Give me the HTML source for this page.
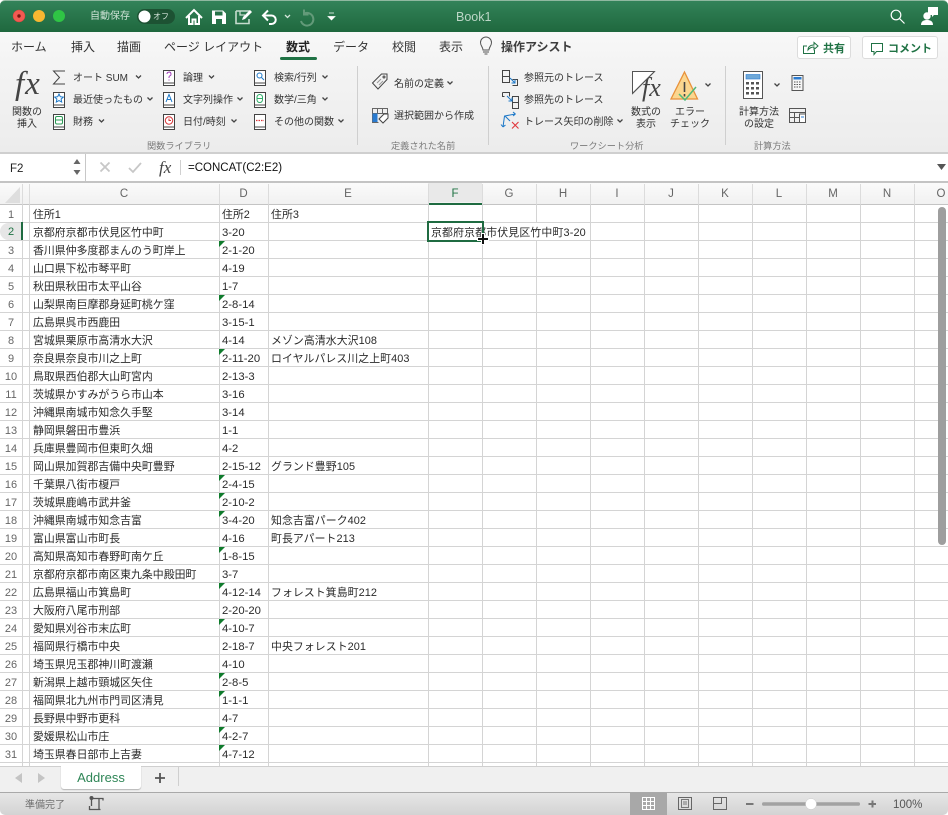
<!DOCTYPE html>
<html lang="ja"><head><meta charset="utf-8"><title>Book1</title>
<style>
html,body{margin:0;padding:0;background:#fff}
#a{position:relative;width:948px;height:815px;overflow:hidden;background:#fff;font-family:"Liberation Sans","Noto Sans CJK JP",sans-serif;color:#222}
#a div,#a span,#a svg{position:absolute}
.t{white-space:nowrap;line-height:14px;font-size:10px;color:#333;margin-top:2px}
.l{white-space:nowrap;line-height:14px;font-size:9.2px;color:#7b7b7b;top:139px}
.tab{white-space:nowrap;top:40px;line-height:15px;font-size:12px;color:#333}
.ctr{text-align:center;white-space:nowrap;font-size:10px;line-height:11.5px;color:#333}
.sep{width:1px;background:#cfcfcf;top:66px;height:79px}
.hl{top:183px;height:22px;line-height:22px;text-align:center;font-size:11.5px;color:#666}
.vl{top:204px;height:562px;width:1px;background:#d4d4d4}
.vh{top:184px;height:20px;width:1px;background:#dcdcdc}
.r{left:0;width:948px;height:18px}
.r b{position:absolute;left:0;top:1px;width:22px;text-align:center;font-weight:normal;font-size:11px;line-height:18px;color:#666}
.r i,.r u,.r s{position:absolute;font-style:normal;text-decoration:none;white-space:nowrap;font-size:10.9px;line-height:18px;color:#2a2a2a;top:1px}
.r i{left:33px}.r u{left:222px;font-size:11.3px}.r s{left:271px;letter-spacing:.06px}
.r em{position:absolute;left:219px;top:0;width:0;height:0;border-top:6px solid #0f7b2c;border-right:6px solid transparent}
svg{overflow:visible}
</style></head><body><div id="a">

<!-- title bar -->
<div style="left:0;top:0;width:948px;height:32px;background:linear-gradient(#33835a 0,#2c7a50 30%,#1f683e 100%);border-radius:5px 5px 0 0;border-top:1px solid #8fb8a0;box-sizing:border-box"></div>
<svg style="left:0;top:0" width="948" height="32" fill="none">
<circle cx="19" cy="16" r="6" fill="#f25a52" stroke="#d8433b" stroke-width=".5"/><circle cx="19" cy="16" r="1.7" fill="#7a1410"/>
<circle cx="39" cy="16" r="6" fill="#f7b731"/><circle cx="59" cy="16" r="6" fill="#2fc545"/>
<rect x="137" y="9" width="38" height="15" rx="7.5" fill="#1d5233"/><circle cx="144.500" cy="16.500" r="6" fill="#fff"/>
<path d="M186 18l8-8 8 8M189 16v8h3.500v-4.500h3V24h3.500v-8" stroke="#fff" stroke-width="2"/>
<path d="M212 10.500h11l3 3V24h-14z" fill="#fff"/><rect x="215" y="11.500" width="7.500" height="4" fill="#267248"/><rect x="216" y="19" width="6" height="5" fill="#267248"/>
<path d="M236 11h13v3M236 11v12.500h13V19" stroke="#c5dccd" stroke-width="1.600"/><path d="M240 11v4h5" stroke="#c5dccd" stroke-width="1.300"/><path d="M242 20l1-3 7-7 2 2-7 7z" fill="#fff"/>
<path d="M268 10.500l-5 5 5 5M263 15.500h8.500a4.200 4.200 0 0 1 0 8.500H269" stroke="#fff" stroke-width="2"/>
<path d="M285 15l2.500 2.500L290 15" stroke="#d5e5da" stroke-width="1.300"/>
<path d="M304 9.500v5h4.500M304.500 13.500a6.300 6.300 0 1 1-3.500 7.500" stroke="#639a79" stroke-width="2"/>
<path d="M329 13h5M328 16.500h7l-3.500 3.500z" fill="#fff" stroke="#fff" stroke-width=".7"/>
<circle cx="896" cy="15" r="4.800" stroke="#fff" stroke-width="1.200"/><path d="M899.500 18.500l5 5" stroke="#fff" stroke-width="1.200"/>
<path d="M928 7h10v8h-4l-2 2v-2h-4z" fill="#fff"/><circle cx="927" cy="16" r="3.700" fill="#fff"/><path d="M921 25c0-4 3-5 6-5s6 1 6 5z" fill="#fff"/>
</svg>
<div class="t" style="left:90px;top:8px;color:#cfe3d6;font-size:10px">自動保存</div>
<div class="t" style="left:153px;top:8px;color:#d4e4da;font-size:8px">オフ</div>
<div class="t" style="left:456px;top:7px;width:40px;color:#bdd7c7;font-size:12.5px;line-height:16px">Book1</div>

<!-- ribbon -->
<div style="left:0;top:32px;width:948px;height:121px;background:linear-gradient(#f8f8f8 0,#f4f4f4 25%,#ececec 100%)"></div>
<div style="left:0;top:152px;width:948px;height:2px;background:#cfcfcf"></div>
<div class="tab" style="left:11px">ホーム</div>
<div class="tab" style="left:71px">挿入</div>
<div class="tab" style="left:117px">描画</div>
<div class="tab" style="left:164px">ページ レイアウト</div>
<div class="tab" style="left:286px;color:#222;font-weight:bold">数式</div>
<div class="tab" style="left:333px">データ</div>
<div class="tab" style="left:392px">校閲</div>
<div class="tab" style="left:439px">表示</div>
<div style="left:280px;top:57px;width:37px;height:3px;background:#1f7244;border-radius:2px"></div>
<div class="tab" style="left:501px;font-weight:bold;color:#3d3d3d">操作アシスト</div>
<div style="left:797px;top:36px;width:54px;height:23px;background:#fff;border:1px solid #dcdcdc;border-radius:3px;box-sizing:border-box"></div>
<div style="left:862px;top:36px;width:76px;height:23px;background:#fff;border:1px solid #dcdcdc;border-radius:3px;box-sizing:border-box"></div>
<div class="t" style="left:823px;top:40px;font-size:11px;color:#1f7244;font-weight:bold">共有</div>
<div class="t" style="left:888px;top:40px;font-size:11px;color:#1f7244;font-weight:bold">コメント</div>

<div style="left:15px;top:64px;width:30px;font:italic 33px/40px 'Liberation Serif',serif;color:#444;letter-spacing:1px;white-space:nowrap">fx</div>
<div class="ctr" style="left:7px;top:107px;width:40px">関数の<br>挿入</div>
<div class="t" style="left:73px;top:70px">オート SUM</div>
<div class="t" style="left:73px;top:92px">最近使ったもの</div>
<div class="t" style="left:73px;top:114px">財務</div>
<div class="t" style="left:183px;top:70px">論理</div>
<div class="t" style="left:183px;top:92px">文字列操作</div>
<div class="t" style="left:183px;top:114px">日付/時刻</div>
<div class="t" style="left:274px;top:70px">検索/行列</div>
<div class="t" style="left:274px;top:92px">数学/三角</div>
<div class="t" style="left:274px;top:114px">その他の関数</div>
<div class="l" style="left:147px">関数ライブラリ</div>
<div class="sep" style="left:357px"></div>
<div class="t" style="left:394px;top:76px">名前の定義</div>
<div class="t" style="left:394px;top:108px">選択範囲から作成</div>
<div class="l" style="left:391px">定義された名前</div>
<div class="sep" style="left:488px"></div>
<div class="t" style="left:524px;top:70px">参照元のトレース</div>
<div class="t" style="left:524px;top:92px">参照先のトレース</div>
<div class="t" style="left:524px;top:114px">トレース矢印の削除</div>
<div class="ctr" style="left:626px;top:107px;width:40px">数式の<br>表示</div>
<div class="ctr" style="left:665px;top:107px;width:50px">エラー<br>チェック</div>
<div class="l" style="left:570px">ワークシート分析</div>
<div class="sep" style="left:725px"></div>
<div class="ctr" style="left:734px;top:107px;width:50px">計算方法<br>の設定</div>
<div class="l" style="left:754px">計算方法</div>
<div style="left:633px;top:63px;width:30px;font:italic 26px/50px 'Liberation Serif',serif;color:#444;padding-left:9px;white-space:nowrap;height:50px">fx</div>

<svg style="left:0;top:0" width="948" height="160" fill="none">
<!-- chevrons -->
<g stroke="#444" stroke-width="1.300">
<path d="M136 75.500l2.500 2.500 2.500-2.500M147.500 97.500l2.500 2.500 2.500-2.500M99 119.500l2.500 2.500 2.500-2.500M209 75.500l2.500 2.500 2.500-2.500M237.500 97.500l2.500 2.500 2.500-2.500M231.500 119.500l2.500 2.500 2.500-2.500M322.500 75.500l2.500 2.500 2.500-2.500M322.500 97.500l2.500 2.500 2.500-2.500M338.500 119.500l2.500 2.500 2.500-2.500M447.500 81.500l2.500 2.500 2.500-2.500M617.500 119.500l2.500 2.500 2.500-2.500M705.500 83.500l2.500 2.500 2.500-2.500M774.500 83.500l2.500 2.500 2.500-2.500"/>
</g>
<!-- sigma -->
<path d="M65 71H53.500l6 6.500-6 6.500H65" stroke="#444"/>
<!-- book icons -->
<g stroke="#444" fill="#fff">
<path d="M53.500 92.500h11v15h-11z"/><path d="M53.500 114.500h11v15h-11z"/>
<path d="M163.500 70.500h11v15h-11z"/><path d="M163.500 92.500h11v15h-11z"/><path d="M163.500 114.500h11v15h-11z"/>
<path d="M254.500 70.500h11v15h-11z"/><path d="M254.500 92.500h11v15h-11z"/><path d="M254.500 114.500h11v15h-11z"/>
</g>
<g stroke="#444"><path d="M54 105h10M54 127h10M164 83h10M164 105h10M164 127h10M255 83h10M255 105h10M255 127h10"/></g>
<path d="M59 94l1.300 2.700 3 .4-2.200 2 .6 3-2.700-1.500-2.700 1.500.6-3-2.200-2 3-.4z" stroke="#1c78c8"/>
<rect x="55.500" y="116.500" width="7" height="7.500" rx="1.500" stroke="#2b9a55"/><path d="M55.500 120h7" stroke="#2b9a55"/>
<path d="M167 74a2 2 0 1 1 2.500 2c-.5.300-.5 1-.5 2M169 79.500v1" stroke="#a040b8"/>
<path d="M166 102l3-7.500 3 7.500M167 99.500h4" stroke="#1c78c8"/>
<circle cx="169" cy="120.500" r="3.700" stroke="#d8373a"/><path d="M169 118.500v2h2" stroke="#d8373a"/>
<circle cx="259.500" cy="75.500" r="2.500" stroke="#1c78c8"/><path d="M261.500 77.500l2.500 2.500" stroke="#1c78c8"/>
<rect x="257" y="94.500" width="5.500" height="8" rx="2.700" stroke="#2fae6a"/><path d="M257 98.500h5.500" stroke="#2fae6a"/>
<path d="M256 120.500h8" stroke="#d8373a" stroke-dasharray="1.500 1" stroke-width="1.300"/>
<!-- tag -->
<path d="M372.500 83l9-9h5.500v5.500l-9 9.500z" stroke="#444"/><circle cx="384" cy="77" r="1" stroke="#444"/><path d="M377 83l4-4M379 85l4-4" stroke="#999"/>
<!-- create from selection -->
<path d="M372.500 108.500h15v5h-15zM372.500 108.500v14h6" stroke="#666"/>
<rect x="372.500" y="113.500" width="5" height="8.500" fill="#2a7bd0"/><path d="M377.500 108.500v5M382.500 108.500v5" stroke="#666"/>
<path d="M379 119l5-5h4v4l-5 5z" fill="#fff" stroke="#444"/>
<!-- trace precedents -->
<path d="M502.500 70.500h7v6h-7zM502.500 76.500h7v6h-7z" stroke="#444"/><path d="M512.500 79.500h5v6h-5" stroke="#444"/><path d="M510 78l5 5M515 79.500V83h-3.500" stroke="#1c78c8"/>
<path d="M502.500 92.500h7v4M502.500 92.500v4h2" stroke="#444"/><path d="M512.500 96.500h6v6h-6zM512.500 102.500h6v6h-6z" stroke="#444"/><path d="M507 96l5 5M512 97.500V101h-3.500" stroke="#1c78c8"/>
<!-- remove arrows -->
<path d="M503 127l1.500-11 11-2M503 127l-2-2.500M503 127l2.500-2M515.500 114l-2.500-2M515.500 114l-2.500 2M505 116l5 5" stroke="#1c78c8"/>
<path d="M512 122l6.500 6.500M518.500 122l-6.500 6.500" stroke="#e0383e" stroke-width="1.100"/>
<!-- show formulas -->
<path d="M632.500 71.500h22l-22 22z" fill="#fff" stroke="#555"/><path d="M654.500 71.500l-22 22" stroke="#555"/>
<!-- error check -->
<path d="M684.500 72l13 27h-26.500z" fill="#fbd68f" stroke="#e8913a" stroke-width="1.300"/>
<path d="M684.500 82v10M684.500 94v2.500" stroke="#444" stroke-width="1.600"/>
<path d="M679 94l6 6 11-13" stroke="#51b878" stroke-width="1.500" fill="none"/>
<!-- calculator -->
<rect x="743.500" y="71.500" width="19" height="27" fill="#fff" stroke="#555"/>
<rect x="746" y="74.500" width="14" height="4.500" fill="#6ea8d8" stroke="#2a7bd0" stroke-width=".6"/>
<g fill="#555"><rect x="746" y="82" width="3" height="2.500"/><rect x="751" y="82" width="3" height="2.500"/><rect x="756" y="82" width="3" height="2.500"/><rect x="746" y="87" width="3" height="2.500"/><rect x="751" y="87" width="3" height="2.500"/><rect x="756" y="87" width="3" height="2.500"/><rect x="746" y="92" width="3" height="2.500"/><rect x="751" y="92" width="3" height="2.500"/><rect x="756" y="92" width="3" height="2.500"/></g>
<rect x="792" y="75.500" width="11" height="15" fill="#f6f6f6" stroke="#555"/><rect x="793.500" y="77" width="8" height="2.500" fill="#2a7bd0"/>
<path d="M794 82h7M794 84.500h7M794 87h7" stroke="#555" stroke-dasharray="1.500 1" stroke-width="1.100"/>
<!-- calc sheet -->
<path d="M789.500 108.500h16v14h-16zM789.500 112.500h16M794.500 112.500v10M789.500 117.500h10" stroke="#555"/><rect x="799.500" y="114" width="6" height="8.500" fill="#fff" stroke="#555"/><path d="M801 117h3" stroke="#2a7bd0"/>
<!-- bulb -->
<path d="M483 50c0-3-2.500-4-2.500-7.500a5.500 5.500 0 0 1 11 0c0 3.500-2.500 4.500-2.500 7.500zM483 52h6M484.500 54h3" stroke="#555"/>
<!-- share / comment -->
<path d="M807 46h-3.500v7.500h11V50" stroke="#1f7244"/><path d="M808 50c0-3 2-5 6-5v-2.500l4 3.500-4 3.500V47c-2.500 0-4.500 1-6 3z" stroke="#1f7244"/>
<path d="M871.500 43.500h11v8h-6l-2.500 3v-3h-2.500z" stroke="#1f7244"/>
</svg>

<!-- formula bar -->
<div style="left:0;top:154px;width:948px;height:27px;background:#fff"></div>
<div style="left:0;top:181px;width:948px;height:2px;background:#c4c4c4"></div>
<div style="left:85px;top:154px;width:1px;height:27px;background:#c8c8c8"></div>
<div style="left:10px;top:161px;font-size:11.5px;line-height:16px;color:#222">F2</div>
<div style="left:188px;top:160px;font-size:11.5px;line-height:16px;color:#111;white-space:nowrap">=CONCAT(C2:E2)</div>
<div style="left:159px;top:157px;font:italic 17px/22px 'Liberation Serif',serif;color:#444;white-space:nowrap">fx</div>
<svg style="left:0;top:150px" width="948" height="32" fill="none">
<path d="M73.500 14l3.500-5 3.500 5zM73.500 20l3.500 5 3.500-5z" fill="#666"/>
<path d="M100.500 12.500l9 9M109.500 12.500l-9 9" stroke="#c7c7c7" stroke-width="1.800"/>
<path d="M129 18l4 4 8-9" stroke="#c7c7c7" stroke-width="1.800"/>
<path d="M180.500 10v15" stroke="#d0d0d0"/>
<path d="M937 14h9l-4.500 6z" fill="#555"/>
</svg>

<!-- column header -->
<div style="left:0;top:183px;width:948px;height:21px;background:linear-gradient(#fbfbfb,#f1f1f1);border-bottom:1px solid #c4c4c4;box-sizing:content-box"></div>
<svg style="left:0;top:183px" width="30" height="21"><path d="M20 4v16H5z" fill="#dedede"/></svg>
<div style="left:428px;top:183px;width:54px;height:19px;background:#e9e9e9"></div>
<div style="left:428px;top:203px;width:55px;height:2px;background:#1f6b41"></div>
<div class="hl" style="left:29px;width:190px">C</div>
<div class="hl" style="left:219px;width:49px">D</div>
<div class="hl" style="left:268px;width:160px">E</div>
<div class="hl" style="left:428px;width:54px;color:#1f7244">F</div>
<div class="hl" style="left:482px;width:54px">G</div>
<div class="hl" style="left:536px;width:54px">H</div>
<div class="hl" style="left:590px;width:54px">I</div>
<div class="hl" style="left:644px;width:54px">J</div>
<div class="hl" style="left:698px;width:54px">K</div>
<div class="hl" style="left:752px;width:54px">L</div>
<div class="hl" style="left:806px;width:54px">M</div>
<div class="hl" style="left:860px;width:54px">N</div>
<div class="hl" style="left:914px;width:54px">O</div>

<!-- grid lines -->
<div style="left:0;top:205px;width:948px;height:561px;background:repeating-linear-gradient(#fff 0,#fff 17px,#d4d4d4 17px,#d4d4d4 18px)"></div>
<div class="vl" style="left:22px"></div><div class="vl" style="left:29px"></div><div class="vl" style="left:219px"></div><div class="vl" style="left:268px"></div><div class="vl" style="left:428px"></div><div class="vl" style="left:482px"></div><div class="vl" style="left:536px"></div><div class="vl" style="left:590px"></div><div class="vl" style="left:644px"></div><div class="vl" style="left:698px"></div><div class="vl" style="left:752px"></div><div class="vl" style="left:806px"></div><div class="vl" style="left:860px"></div><div class="vl" style="left:914px"></div>
<div class="vh" style="left:22px"></div><div class="vh" style="left:29px"></div><div class="vh" style="left:219px"></div><div class="vh" style="left:268px"></div><div class="vh" style="left:428px"></div><div class="vh" style="left:482px"></div><div class="vh" style="left:536px"></div><div class="vh" style="left:590px"></div><div class="vh" style="left:644px"></div><div class="vh" style="left:698px"></div><div class="vh" style="left:752px"></div><div class="vh" style="left:806px"></div><div class="vh" style="left:860px"></div><div class="vh" style="left:914px"></div>

<!-- rows -->
<div class="r" style="top:205px"><b>1</b><i>住所1</i><u style="font-size:10.9px">住所2</u><s>住所3</s></div>
<div class="r" style="top:223px"><b style="color:#1f7244;background:#e6e6e6;border-radius:9px 0 0 9px;top:0;padding-top:1px;height:16px;line-height:16px">2</b><i>京都府京都市伏見区竹中町</i><u>3-20</u></div>
<div class="r" style="top:241px"><b>3</b><i>香川県仲多度郡まんのう町岸上</i><em></em><u>2-1-20</u></div>
<div class="r" style="top:259px"><b>4</b><i>山口県下松市琴平町</i><u>4-19</u></div>
<div class="r" style="top:277px"><b>5</b><i>秋田県秋田市太平山谷</i><u>1-7</u></div>
<div class="r" style="top:295px"><b>6</b><i>山梨県南巨摩郡身延町桃ケ窪</i><em></em><u>2-8-14</u></div>
<div class="r" style="top:313px"><b>7</b><i>広島県呉市西鹿田</i><u>3-15-1</u></div>
<div class="r" style="top:331px"><b>8</b><i>宮城県栗原市高清水大沢</i><u>4-14</u><s>メゾン高清水大沢108</s></div>
<div class="r" style="top:349px"><b>9</b><i>奈良県奈良市川之上町</i><em></em><u>2-11-20</u><s>ロイヤルパレス川之上町403</s></div>
<div class="r" style="top:367px"><b>10</b><i>鳥取県西伯郡大山町宮内</i><u>2-13-3</u></div>
<div class="r" style="top:385px"><b>11</b><i>茨城県かすみがうら市山本</i><u>3-16</u></div>
<div class="r" style="top:403px"><b>12</b><i>沖縄県南城市知念久手堅</i><u>3-14</u></div>
<div class="r" style="top:421px"><b>13</b><i>静岡県磐田市豊浜</i><u>1-1</u></div>
<div class="r" style="top:439px"><b>14</b><i>兵庫県豊岡市但東町久畑</i><u>4-2</u></div>
<div class="r" style="top:457px"><b>15</b><i>岡山県加賀郡吉備中央町豊野</i><u>2-15-12</u><s>グランド豊野105</s></div>
<div class="r" style="top:475px"><b>16</b><i>千葉県八街市榎戸</i><em></em><u>2-4-15</u></div>
<div class="r" style="top:493px"><b>17</b><i>茨城県鹿嶋市武井釜</i><em></em><u>2-10-2</u></div>
<div class="r" style="top:511px"><b>18</b><i>沖縄県南城市知念吉富</i><em></em><u>3-4-20</u><s>知念吉富パーク402</s></div>
<div class="r" style="top:529px"><b>19</b><i>富山県富山市町長</i><u>4-16</u><s>町長アパート213</s></div>
<div class="r" style="top:547px"><b>20</b><i>高知県高知市春野町南ケ丘</i><em></em><u>1-8-15</u></div>
<div class="r" style="top:565px"><b>21</b><i>京都府京都市南区東九条中殿田町</i><u>3-7</u></div>
<div class="r" style="top:583px"><b>22</b><i>広島県福山市箕島町</i><em></em><u>4-12-14</u><s>フォレスト箕島町212</s></div>
<div class="r" style="top:601px"><b>23</b><i>大阪府八尾市刑部</i><u>2-20-20</u></div>
<div class="r" style="top:619px"><b>24</b><i>愛知県刈谷市末広町</i><em></em><u>4-10-7</u></div>
<div class="r" style="top:637px"><b>25</b><i>福岡県行橋市中央</i><u>2-18-7</u><s>中央フォレスト201</s></div>
<div class="r" style="top:655px"><b>26</b><i>埼玉県児玉郡神川町渡瀬</i><u>4-10</u></div>
<div class="r" style="top:673px"><b>27</b><i>新潟県上越市頸城区矢住</i><em></em><u>2-8-5</u></div>
<div class="r" style="top:691px"><b>28</b><i>福岡県北九州市門司区清見</i><em></em><u>1-1-1</u></div>
<div class="r" style="top:709px"><b>29</b><i>長野県中野市更科</i><u>4-7</u></div>
<div class="r" style="top:727px"><b>30</b><i>愛媛県松山市庄</i><em></em><u>4-2-7</u></div>
<div class="r" style="top:745px"><b>31</b><i>埼玉県春日部市上吉妻</i><em></em><u>4-7-12</u></div>

<div style="left:21px;top:222px;width:2px;height:18px;background:#1f6b41"></div>
<!-- F2 overflow text + selection -->
<div style="left:429px;top:223px;width:160px;height:17px;background:#fff"></div>
<div style="left:431px;top:224px;font-size:10.9px;letter-spacing:.15px;line-height:18px;color:#2a2a2a;white-space:nowrap">京都府京都市伏見区竹中町3-20</div>
<div style="left:427px;top:221px;width:57px;height:21px;border:2px solid #1f6b41;box-sizing:border-box"></div>
<svg style="left:476px;top:232px" width="14" height="14"><path d="M7 1v12M1 7h12" stroke="#fff" stroke-width="4"/><path d="M7 2v10M2 7h10" stroke="#111" stroke-width="2"/></svg>
<!-- scrollbar -->
<div style="left:938px;top:207px;width:8px;height:338px;background:#9e9e9e;border-radius:4px"></div>

<!-- tab bar -->
<div style="left:0;top:766px;width:948px;height:26px;background:#f0f0f0;border-top:1px solid #cfcfcf;box-sizing:border-box"></div>
<div style="left:61px;top:766px;width:80px;height:23px;background:#fff;border-radius:0 0 3px 3px;box-shadow:0 1px 1px #b5b5b5"></div>
<div style="left:61px;top:769px;width:80px;text-align:center;font-size:13px;line-height:17px;color:#2f8657">Address</div>
<svg style="left:0;top:766px" width="200" height="26" fill="none">
<path d="M22 7v10l-7-5z" fill="#c4c4c4"/><path d="M38 7v10l7-5z" fill="#c4c4c4"/>
<path d="M160 7v10M155 12h10" stroke="#555" stroke-width="1.800"/><path d="M178.500 0v20" stroke="#cfcfcf"/>
</svg>

<!-- status bar -->
<div style="left:0;top:792px;width:948px;height:23px;background:linear-gradient(#e6e6e6,#d3d3d3);border-top:1px solid #a9a9a9;box-sizing:border-box;border-radius:0 0 5px 5px"></div>
<div class="t" style="left:25px;top:797px;color:#707070">準備完了</div>
<div style="left:630px;top:793px;width:37px;height:22px;background:#a8a8a8"></div>
<div class="t" style="left:893px;top:796px;font-size:11.5px;color:#555;line-height:15px">100%</div>
<svg style="left:0;top:792px" width="948" height="23" fill="none">
<path d="M93 6.500h10v2M99 6.500v11M91.500 7v7M89.500 14v3.500h11" stroke="#555" stroke-width="1.300"/><circle cx="91.500" cy="6" r="2" fill="#555"/>
<path d="M642.500 5.500h12v12h-12zM642.500 9.500h12M642.500 13.500h12M646.500 5.500v12M650.500 5.500v12" stroke="#fff"/>
<path d="M678.500 5.500h13v12h-13z" stroke="#666"/><path d="M681.500 7.500h7v8h-7zM683 10h4M683 12h4" stroke="#777"/>
<path d="M713.500 5.500h13v12h-13zM713.500 11.500h8v-6" stroke="#666"/>
<path d="M746 12h7.500M868.500 12h7.500M872.500 8.500v7" stroke="#777" stroke-width="2"/>
<rect x="762" y="10.300" width="98" height="3.500" rx="1.700" fill="#a2a2a2"/>
<circle cx="811" cy="12" r="5.500" fill="#fff" stroke="#ccc" stroke-width=".5"/>
</svg>
</div></body></html>
